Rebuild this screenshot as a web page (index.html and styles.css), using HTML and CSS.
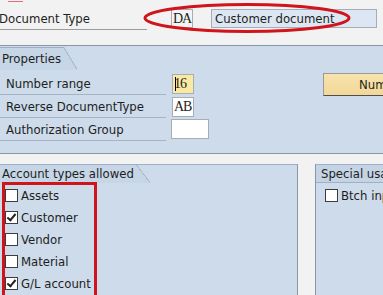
FILE: index.html
```html
<!DOCTYPE html>
<html lang="en">

<head>
    <meta charset="UTF-8">
    <title>Document Type</title>
    <link rel="stylesheet" href="styles.css">
</head>

<body>
    <!-- header row -->
    <header class="top">
        <div class="row_top">
            <span class="top_label">Document Type</span>
            <span class="field mono field_da">DA</span>
            <span class="field field_desc">Customer document</span>
        </div>
        <svg class="mark_ellipse" width="216" height="34" viewBox="0 0 216 34">
            <ellipse cx="106" cy="16" rx="102" ry="13.5" fill="none" stroke="#d0141c" stroke-width="3" />
        </svg>
        <span class="mark_dash"></span>
    </header>

    <!-- properties -->
    <section class="props">
        <div class="tab">Properties</div>
        <div class="props_body">
            <div class="props_rows">
                <div class="prow">
                    <span class="plabel">Number range</span>
                    <span class="field mono field_small field_yellow"><i class="caret"></i>16</span>
                </div>
                <div class="prow">
                    <span class="plabel">Reverse DocumentType</span>
                    <span class="field mono field_small field_white">AB</span>
                </div>
                <div class="prow">
                    <span class="plabel">Authorization Group</span>
                    <span class="field field_auth field_white"></span>
                </div>
            </div>
            <div class="btn">Number ranges</div>
        </div>
    </section>

    <div class="gap"></div>

    <!-- account types / special usage -->
    <section class="bottom">
        <div class="panel_left">
            <div class="tab">Account types allowed</div>
            <ul class="checks">
                <li><span class="cb"></span>Assets</li>
                <li><span class="cb checked"></span>Customer</li>
                <li><span class="cb"></span>Vendor</li>
                <li><span class="cb"></span>Material</li>
                <li><span class="cb checked"></span>G/L account</li>
            </ul>
            <div class="mark_box"></div>
        </div>
        <div class="panel_right">
            <div class="bar">Special usage</div>
            <ul class="checks">
                <li><span class="cb"></span>Btch input</li>
            </ul>
        </div>
    </section>
</body>

</html>
```

FILE: styles.css
```css
* {
    padding: 0;
    margin: 0;
    box-sizing: border-box;
}

body {
    width: 383px;
    height: 295px;
    overflow: hidden;
    background-color: #f2f2f2;
    font-family: Tahoma, "DejaVu Sans Condensed", "DejaVu Sans", sans-serif;
    font-size: 12px;
    color: #1e1e1e;
    position: relative;
}

ul {
    list-style: none;
}

.mono {
    font-family: "Liberation Serif", "Times New Roman", serif;
    font-size: 14px;
    letter-spacing: -1px;
}

.top {
    height: 46px;
    padding-top: 9px;
    border-bottom: 1px solid #8796a8;
    position: relative;
}

.row_top {
    display: flex;
    align-items: flex-start;
    height: 21px;
}

.top_label {
    width: 148px;
    height: 21px;
    line-height: 20px;
    font-size: 13px;
    border-bottom: 1px solid #9c9c9c;
    margin-left: -1px;
}

.field {
    height: 19px;
    line-height: 18px;
    border: 1px solid #a7adb6;
    white-space: nowrap;
    overflow: hidden;
    flex-shrink: 0;
}

.field_da {
    width: 22px;
    margin-left: 24px;
    padding-left: 1px;
    background-color: #f4f4f4;
}

.field_desc {
    width: 166px;
    margin-left: 18px;
    padding-left: 3px;
    font-size: 13px;
    background-color: #dde7f3;
}

.mark_ellipse {
    position: absolute;
    left: 141px;
    top: 2px;
}

.mark_dash {
    position: absolute;
    left: 8px;
    top: 1px;
    width: 15px;
    height: 1px;
    background-color: #e0707a;
}

.props {
    height: 108px;
    background-color: #cddbea;
    border-bottom: 1px solid #8796a8;
    padding-top: 1px;
}

.tab {
    position: relative;
    display: inline-block;
    height: 23px;
    line-height: 22px;
    padding: 0 2px;
    font-size: 13px;
    background-color: #c6d6e6;
    border-top: 1px solid #9fb0c4;
}

.tab::after {
    content: "";
    position: absolute;
    top: -1px;
    right: -14px;
    width: 14px;
    height: 23px;
    background: linear-gradient(to top right, #c6d6e6 49%, #9fb0c4 50%, transparent 56%);
}

.props_body {
    display: flex;
    align-items: flex-start;
    padding-top: 4px;
}

.props_rows {
    flex: 1;
}

.prow {
    display: flex;
    align-items: flex-start;
    height: 23px;
}

.plabel {
    width: 166px;
    height: 21px;
    line-height: 19px;
    padding-left: 6px;
    font-size: 13px;
    border-bottom: 1px solid #a5b3c3;
}

.field_small {
    width: 22px;
    height: 20px;
    margin-left: 6px;
    padding-left: 1px;
    position: relative;
}

.field_yellow {
    background-color: #fbe9a3;
}

.field_white {
    background-color: #ffffff;
}

.field_auth {
    width: 38px;
    height: 20px;
    margin-left: 5px;
    margin-top: -1px;
}

.caret {
    position: absolute;
    left: 2px;
    top: 2px;
    width: 1px;
    height: 14px;
    background-color: #000;
}

.btn {
    width: 80px;
    height: 23px;
    margin-top: -1px;
    margin-right: -20px;
    padding-left: 35px;
    line-height: 21px;
    font-size: 13px;
    white-space: nowrap;
    overflow: hidden;
    flex-shrink: 0;
    background: linear-gradient(#f8e3ae, #f2d898);
    border: 1px solid #9a9a9a;
    border-right-color: #5e5e5e;
    border-bottom-color: #4e4e4e;
}

.gap {
    height: 10px;
}

.bottom {
    display: flex;
    justify-content: space-between;
    height: 131px;
}

.panel_left {
    position: relative;
    width: 298px;
    background-color: #cddbea;
    border-right: 1px solid #8796a8;
    border-top: 1px solid #9fb0c4;
}

.panel_left .tab {
    border-top: none;
    height: 18px;
    line-height: 17px;
}

.panel_left .tab::after {
    top: 0;
    height: 18px;
}

.panel_right {
    width: 68px;
    background-color: #cddbea;
    border-left: 1px solid #8796a8;
    border-top: 1px solid #9fb0c4;
}

.bar {
    height: 18px;
    line-height: 17px;
    padding-left: 5px;
    font-size: 13px;
    white-space: nowrap;
    overflow: hidden;
    background-color: #c4d4e4;
    border-bottom: 1px solid #9fb0c4;
}

.checks {
    padding-top: 1px;
}

.checks li {
    display: flex;
    align-items: center;
    height: 22px;
    font-size: 13px;
    white-space: nowrap;
}

.panel_left .checks li {
    padding-left: 5px;
}

.panel_right .checks li {
    padding-left: 9px;
}

.cb {
    position: relative;
    flex-shrink: 0;
    width: 13px;
    height: 13px;
    margin-right: 3px;
    background-color: #ffffff;
    border: 1px solid #3c3c3c;
}

.cb.checked::after {
    content: "";
    position: absolute;
    left: 3px;
    top: 0px;
    width: 3px;
    height: 7px;
    border-right: 2px solid #222;
    border-bottom: 2px solid #222;
    transform: rotate(40deg);
}

.mark_box {
    position: absolute;
    left: 2px;
    top: 17px;
    width: 95px;
    height: 120px;
    border: 3px solid #d0141c;
}
```
